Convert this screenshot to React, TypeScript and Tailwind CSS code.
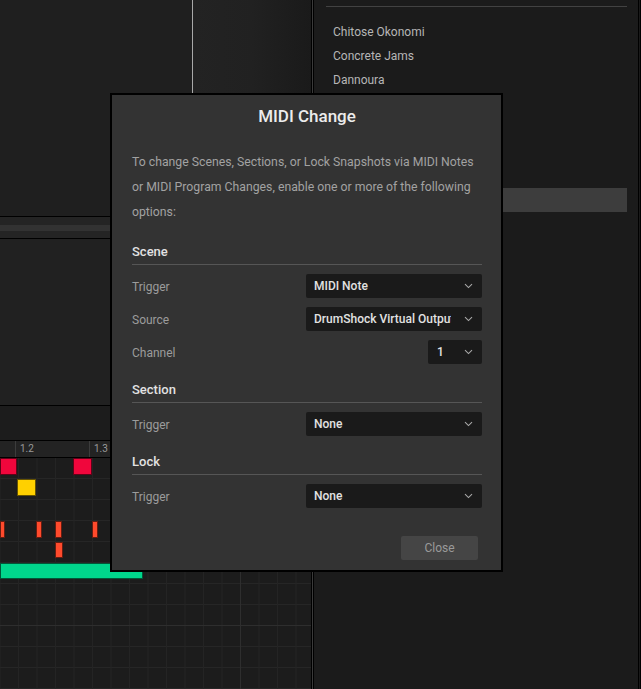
import type { ReactNode } from "react";

const presets = ["Chitose Okonomi", "Concrete Jams", "Dannoura"];

const notes = [
  { row: 0, x: 0, w: 17, h: 17, color: "bg-[#f0063c]" },
  { row: 0, x: 73, w: 19, h: 17, color: "bg-[#f0063c]" },
  { row: 1, x: 17, w: 19, h: 17, color: "bg-[#ffd000]" },
  { row: 3, x: 0, w: 5, h: 17, color: "bg-[#ff4a2c]" },
  { row: 3, x: 36, w: 6, h: 17, color: "bg-[#ff4a2c]" },
  { row: 3, x: 55, w: 7, h: 17, color: "bg-[#ff4a2c]" },
  { row: 3, x: 92, w: 6, h: 17, color: "bg-[#ff4a2c]" },
  { row: 4, x: 55, w: 8, h: 16, color: "bg-[#ff4a2c]" },
  { row: 5, x: 0, w: 143, h: 16, color: "bg-[#00d68c]" },
];

function Chevron() {
  return (
    <svg width="9" height="6" viewBox="0 0 9 6" fill="none" className="shrink-0">
      <path d="M1 1.2l3.5 3.4L8 1.2" stroke="#a8a8a8" strokeWidth="1.1" />
    </svg>
  );
}

function Select({ value, narrow }: { value: string; narrow?: boolean }) {
  return (
    <div
      className={
        narrow
          ? "flex h-6 w-[54px] items-center justify-between rounded-[2px] bg-[#1a1a1a] pl-[9px] pr-[9px]"
          : "flex h-6 w-[176px] items-center justify-between rounded-[2px] bg-[#1a1a1a] pl-2 pr-[9px]"
      }
    >
      <span className="w-[137px] overflow-hidden whitespace-nowrap text-[12px] font-medium text-[#e2e2e2]">
        {value}
      </span>
      <Chevron />
    </div>
  );
}

function Row({ label, children }: { label: string; children: ReactNode }) {
  return (
    <div className="flex h-6 items-center justify-between">
      <span className="pt-px text-[12px] text-[#9c9c9c]">{label}</span>
      {children}
    </div>
  );
}

function Group({ title, children }: { title: string; children: ReactNode }) {
  return (
    <div>
      <p className="text-[13px] font-medium leading-5 text-[#e2e2e2]">{title}</p>
      <div className="mt-[2px] h-px bg-[#565656]" />
      <div className="mt-[9px] flex flex-col gap-[9px]">{children}</div>
    </div>
  );
}

function PianoRoll() {
  return (
    <div className="relative flex-1 overflow-hidden bg-[#1c1c1c] bg-[linear-gradient(to_right,#242424_1px,transparent_1px),linear-gradient(to_bottom,transparent_20px,#262626_20px)] bg-[size:18.5px_21px] bg-[position:18px_0]">
      <div className="pointer-events-none absolute inset-0 bg-[linear-gradient(to_right,#2e2e2e_1px,transparent_1px),linear-gradient(to_bottom,transparent_167px,#2e2e2e_167px)] bg-[size:296px_168px] bg-[position:240px_0]" />
      {notes.map((n, i) => (
        <div
          key={i}
          className={`absolute border border-black/60 ${n.color}`}
          style={{ top: n.row * 21, left: n.x, width: n.w, height: n.h }}
        />
      ))}
    </div>
  );
}

export default function App() {
  return (
    <main className="relative flex h-[689px] w-[641px] overflow-hidden bg-[#1b1b1b] font-['Roboto','Liberation_Sans',sans-serif]">
      <section className="flex w-[311px] flex-col">
        <div className="flex h-[216px]">
          <div className="w-[192px] bg-[#1f1f1f]" />
          <div className="w-px bg-[#a9a9a9]" />
          <div className="flex-1 bg-linear-to-r from-[#232323] via-[#212121] to-[#1a1a1a]" />
        </div>
        <div className="h-px bg-black" />
        <div className="flex h-[21px] flex-col justify-center bg-[#242424]">
          <div className="h-[6px] bg-[#323232]" />
        </div>
        <div className="h-px bg-black" />
        <div className="h-[166px] bg-[#212121]" />
        <div className="h-px bg-black" />
        <div className="h-[34px] bg-[#1c1c1c]" />
        <div className="h-px bg-black" />
        <div className="flex h-4 bg-[#232323] text-[10px] leading-4 text-[#9a9a9a]">
          <div className="w-[18px]" />
          {["1.2", "1.3", "1.4", "2.1"].map((t) => (
            <div key={t} className="w-[74px] shrink-0 border-l border-[#3c3c3c] pl-[4px]">
              {t}
            </div>
          ))}
        </div>
        <div className="h-px bg-black" />
        <PianoRoll />
      </section>

      <div className="w-px bg-black" />
      <div className="w-px bg-[#3a3a3a]" />
      <div className="w-px bg-black" />

      <aside className="w-[324px] bg-[#1b1b1b] pl-3 pr-[11px] pt-[6px]">
        <div className="h-px bg-[#424242]" />
        <ul className="mt-[13px]">
          {presets.map((p) => (
            <li key={p} className="h-6 px-[7px] text-[12px] leading-6 text-[#b6b6b6]">
              {p}
            </li>
          ))}
          <li className="h-6" />
          <li className="h-6" />
          <li className="h-6" />
          <li className="h-6" />
          <li className="h-6 bg-[#3d3d3d]" />
        </ul>
      </aside>

      <div className="w-px bg-black" />
      <div className="w-px bg-[#1a1a1a]" />
      <div className="w-px bg-black" />

      <div className="absolute left-[110px] top-[93px] w-[393px] border-2 border-black bg-[#333333] pb-[10px] pl-5 pr-[19px] pt-[9px]">
        <h2 className="text-center text-[17px] font-medium leading-6 text-[#ececec]">
          MIDI Change
        </h2>
        <p className="mt-[22px] text-[12.25px] leading-[25px] text-[#a2a2a2]">
          To change Scenes, Sections, or Lock Snapshots via MIDI Notes or MIDI Program Changes, enable one or more of the following options:
        </p>

        <div className="mt-[17px] flex flex-col gap-4">
          <Group title="Scene">
            <Row label="Trigger">
              <Select value="MIDI Note" />
            </Row>
            <Row label="Source">
              <Select value="DrumShock Virtual Output" />
            </Row>
            <Row label="Channel">
              <Select value="1" narrow />
            </Row>
          </Group>
          <Group title="Section">
            <Row label="Trigger">
              <Select value="None" />
            </Row>
          </Group>
          <Group title="Lock">
            <Row label="Trigger">
              <Select value="None" />
            </Row>
          </Group>
        </div>

        <div className="mt-7 flex justify-end pr-1">
          <button className="h-6 w-[77px] rounded-[2px] bg-[#454545] text-[12px] text-[#9a9a9a]">
            Close
          </button>
        </div>
      </div>
    </main>
  );
}
